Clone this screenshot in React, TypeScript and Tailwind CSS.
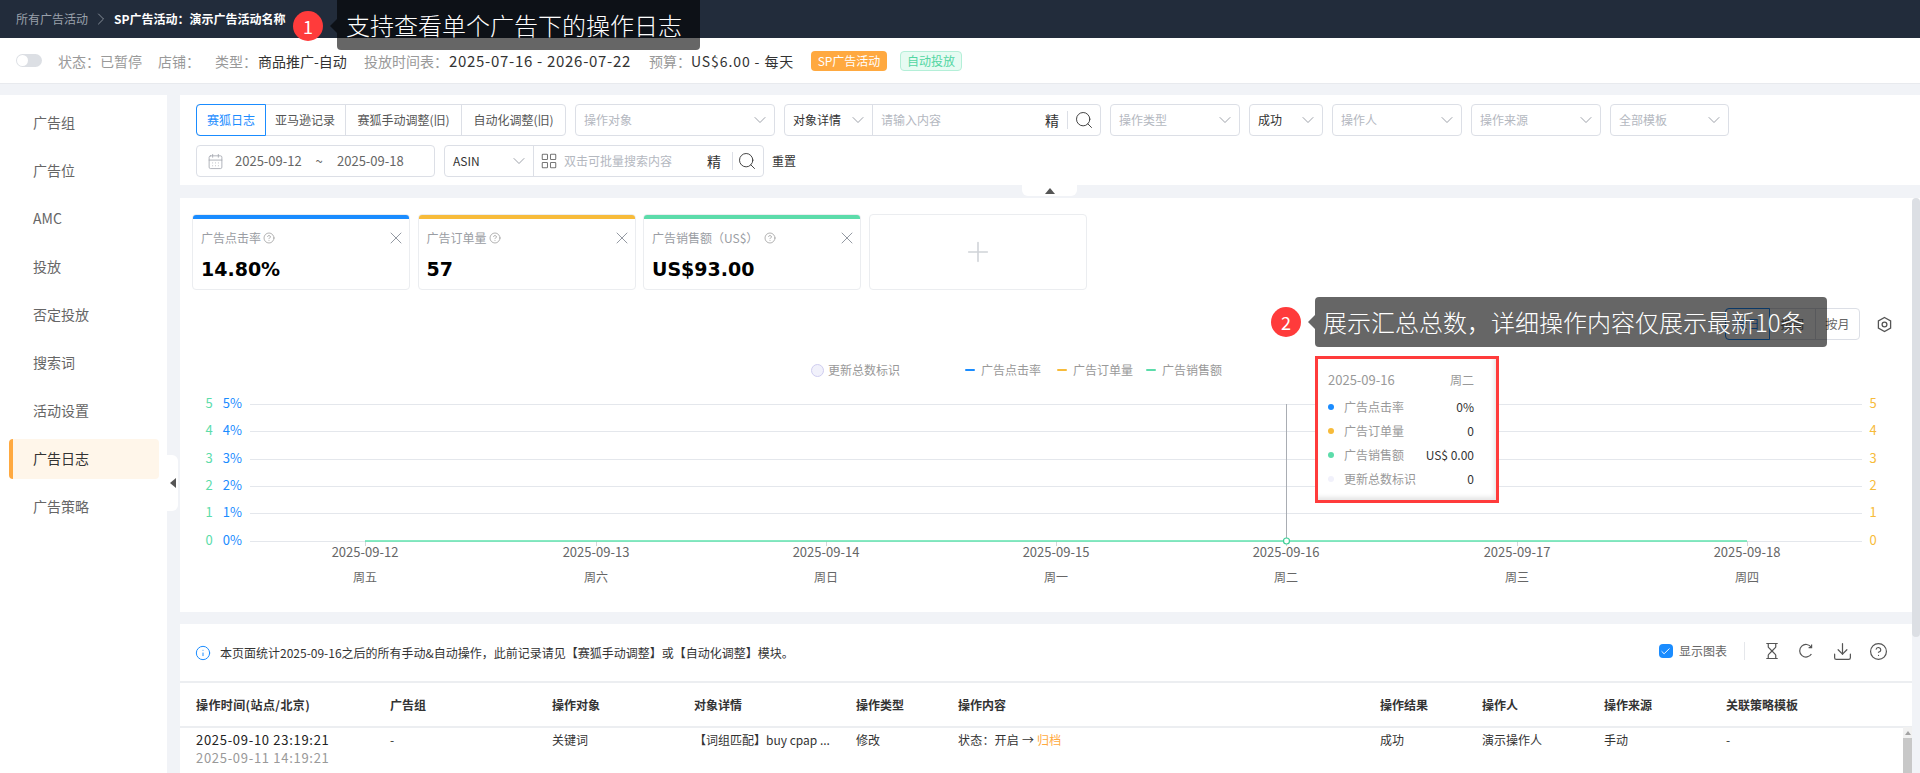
import React from 'react';
import { ChevronDown, ChevronRight, Search, CalendarDays, X, CircleHelp, Plus, Hourglass, Download, Info, Check, LayoutGrid } from 'lucide-react';

const Select = ({ label, w, placeholder = true }: { label: string; w: string; placeholder?: boolean }) => (
  <div className={`${w} h-8 flex items-center justify-between pl-2 pr-1 bg-white border border-[#dcdfe6] rounded text-xs ${placeholder ? 'text-[#b4b8bf]' : 'text-[#333]'}`}>
    <span>{label}</span>
    <ChevronDown className="w-5 h-5 text-[#8a8f99]" strokeWidth={1} />
  </div>
);

const MetricCard = ({ title, value, bar, help }: { title: string; value: string; bar: string; help: string }) => (
  <div className="w-[218px] h-[76px] border border-[#ebedf0] rounded-sm overflow-hidden bg-white">
    <div className={`h-1 ${bar}`}></div>
    <div className="flex items-center justify-between pl-2 pr-[3px] mt-[11px] h-4">
      <div className="flex items-center text-xs text-[#9a9da3]">
        <span>{title}</span>
        <CircleHelp className={`w-3 h-3 ${help}`} strokeWidth={1.5} />
      </div>
      <X className="w-5 h-5 text-[#8a8f99]" strokeWidth={1.1} />
    </div>
    <div className="pl-2 mt-[11px] text-[19px] leading-6 font-bold text-black font-['DejaVu_Sans']">{value}</div>
  </div>
);

const LegendDash = ({ color, label, w }: { color: string; label: string; w: string }) => (
  <div className={`flex items-center ${w}`}>
    <span className={`w-[10px] h-[2px] rounded-sm mr-[6px] ${color}`}></span>
    <span>{label}</span>
  </div>
);

const menu = ['广告组', '广告位', 'AMC', '投放', '否定投放', '搜索词', '活动设置', '广告日志', '广告策略'];
const yLeft = [
  { y: 24, g: '5', b: '5%' },
  { y: 51, g: '4', b: '4%' },
  { y: 79, g: '3', b: '3%' },
  { y: 106, g: '2', b: '2%' },
  { y: 133, g: '1', b: '1%' },
  { y: 161, g: '0', b: '0%' },
];
const xTicks = [
  { x: 185, d: '2025-09-12', w: '周五' },
  { x: 416, d: '2025-09-13', w: '周六' },
  { x: 646, d: '2025-09-14', w: '周日' },
  { x: 876, d: '2025-09-15', w: '周一' },
  { x: 1106, d: '2025-09-16', w: '周二' },
  { x: 1337, d: '2025-09-17', w: '周三' },
  { x: 1567, d: '2025-09-18', w: '周四' },
];
const tipRows = [
  { dot: 'bg-[#1a8cff]', label: '广告点击率', value: '0%' },
  { dot: 'bg-[#f7bb3a]', label: '广告订单量', value: '0' },
  { dot: 'bg-[#5cdcaa]', label: '广告销售额', value: 'US$ 0.00' },
  { dot: 'bg-[#f1f1fb]', label: '更新总数标识', value: '0' },
];
const gridCols = 'grid grid-cols-[194px_162px_142px_162px_102px_422px_102px_122px_122px_1fr]';

export default function App() {
  return (
    <div className="relative w-[1920px] h-[773px] overflow-hidden bg-[#f1f3f7] font-['Noto_Sans_CJK_SC','Noto_Sans',sans-serif] text-[#333]">
      {/* Header */}
      <header className="h-[38px] bg-[#222c3b] flex items-center pl-4 text-xs">
        <span className="text-[#9aa1ab]">所有广告活动</span>
        <ChevronRight className="w-5 h-5 mx-[3px] text-[#9aa1ab]" strokeWidth={1} />
        <span className="text-white font-bold">SP广告活动：演示广告活动名称</span>
      </header>

      {/* Campaign info */}
      <div className="h-[46px] bg-white border-b border-[#e8eaee] flex items-center pl-4 text-sm text-[#999]">
        <div className="relative w-[26px] h-[13px] rounded-full bg-[#dcdfe4] mr-4">
          <span className="absolute left-[1px] top-[1px] w-[11px] h-[11px] rounded-full bg-white"></span>
        </div>
        <span className="w-[100px]">状态：已暂停</span>
        <span className="w-[57px]">店铺：</span>
        <span className="w-[43px]">类型：</span>
        <span className="w-[106px] text-[#333]">商品推广-自动</span>
        <span className="w-[85px]">投放时间表：</span>
        <span className="w-[200px] text-[#333] text-[15px] tracking-[0.7px]">2025-07-16 - 2026-07-22</span>
        <span className="w-[42px]">预算：</span>
        <span className="w-[120px] text-[#333] tracking-[0.9px]">US$6.00 - 每天</span>
        <span className="w-[76px] h-5 rounded-sm bg-[#ffa940] text-white text-xs flex items-center justify-center mr-[13px]">SP广告活动</span>
        <span className="w-[62px] h-5 rounded-sm bg-[#e6fbf2] border border-[#b4efd8] text-[#52d6a2] text-xs flex items-center justify-center">自动投放</span>
      </div>

      <div className="flex pt-[11px] h-[689px]">
        {/* Sidebar */}
        <aside className="relative w-[167px] h-full bg-white pt-2 pl-[9px] pr-2 shrink-0 flex flex-col gap-2">
          {menu.map((item) => (
            <div
              key={item}
              className={
                item === '广告日志'
                  ? 'h-10 pl-5 pb-[2px] flex items-center text-sm text-[#333] bg-[#fff6ea] rounded border-l-4 border-[#ffa940]'
                  : 'h-10 pl-6 pb-[2px] flex items-center text-sm text-[#666]'
              }
            >
              {item}
            </div>
          ))}
          <div className="absolute left-[167px] top-[360px] w-[11px] h-14 bg-white rounded-r-md flex items-center justify-center">
            <span className="w-0 h-0 border-y-[5px] border-y-transparent border-r-[6px] border-r-[#555]"></span>
          </div>
        </aside>

        <main className="ml-[13px] flex-1 min-w-0">
          {/* Filters */}
          <section className="relative h-[90px] bg-white pl-4 pt-[9px]">
            <div className="flex items-start gap-[9px]">
              <div className="flex w-[370px] h-8 border border-[#dcdfe6] rounded text-xs text-[#555]">
                <div className="w-[70px] -m-px border border-[#1a8cff] rounded-l text-[#1a8cff] flex items-center justify-center">赛狐日志</div>
                <div className="w-[81px] flex items-center justify-center border-r border-[#dcdfe6]">亚马逊记录</div>
                <div className="w-[116px] flex items-center justify-center border-r border-[#dcdfe6]">赛狐手动调整(旧)</div>
                <div className="flex-1 flex items-center justify-center">自动化调整(旧)</div>
              </div>
              <Select label="操作对象" w="w-[200px]" />
              <div className="flex w-[317px] h-8 border border-[#dcdfe6] rounded text-xs">
                <div className="w-[88px] border-r border-[#dcdfe6] flex items-center justify-between pl-2 pr-1 text-[#333]">
                  <span>对象详情</span>
                  <ChevronDown className="w-5 h-5 text-[#8a8f99]" strokeWidth={1} />
                </div>
                <div className="flex-1 flex items-center pl-2 text-[#b4b8bf]">请输入内容</div>
                <div className="flex items-center pr-[6px] text-[#333]">
                  <span className="text-sm mr-2">精</span>
                  <span className="w-px h-[18px] bg-[#dcdfe6] mr-[6px]"></span>
                  <Search className="w-5 h-5" strokeWidth={1.1} />
                </div>
              </div>
              <Select label="操作类型" w="w-[130px]" />
              <Select label="成功" w="w-[74px]" placeholder={false} />
              <Select label="操作人" w="w-[130px]" />
              <Select label="操作来源" w="w-[130px]" />
              <Select label="全部模板" w="w-[119px]" />
            </div>
            <div className="flex items-center gap-[9px] mt-[9px]">
              <div className="w-[239px] h-8 border border-[#dcdfe6] rounded flex items-center pl-[10px] text-[13px] text-[#666] whitespace-nowrap">
                <CalendarDays className="w-[17px] h-[17px] text-[#a4a8b0] mr-[11px]" strokeWidth={1.2} />
                <span className="w-[66px]">2025-09-12</span>
                <span className="w-9 text-center">~</span>
                <span>2025-09-18</span>
              </div>
              <div className="flex w-[320px] h-8 border border-[#dcdfe6] rounded text-xs">
                <div className="w-[89px] border-r border-[#dcdfe6] flex items-center justify-between pl-2 pr-1 text-[#333]">
                  <span>ASIN</span>
                  <ChevronDown className="w-5 h-5 text-[#8a8f99]" strokeWidth={1} />
                </div>
                <div className="flex-1 flex items-center pl-[6px] text-[#b4b8bf]">
                  <LayoutGrid className="w-[18px] h-[18px] text-[#777] mr-[6px]" strokeWidth={1.4} />
                  双击可批量搜索内容
                </div>
                <div className="flex items-center pr-[6px] text-[#333]">
                  <span className="text-sm mr-[11px]">精</span>
                  <span className="w-px h-[18px] bg-[#dcdfe6] mr-1"></span>
                  <Search className="w-5 h-5" strokeWidth={1.1} />
                </div>
              </div>
              <span className="text-xs text-[#333] -ml-px">重置</span>
            </div>
            <div className="absolute left-[842px] top-[90px] w-[55px] h-[11px] bg-white rounded-b-md flex items-center justify-center">
              <span className="w-0 h-0 border-x-[5px] border-x-transparent border-b-[6px] border-b-[#555]"></span>
            </div>
          </section>

          {/* Chart */}
          <section className="relative mt-[13px] h-[414px] bg-white pt-4">
            <div className="absolute right-0 top-0 w-2 h-[439px] rounded-sm bg-[#dcdfe4] z-10"></div>
            <div className="flex gap-[7.5px] pl-3">
              <MetricCard title="广告点击率" value="14.80%" bar="bg-[#1a8cff]" help="text-[#999] ml-[2px]" />
              <MetricCard title="广告订单量" value="57" bar="bg-[#f7bb3a]" help="text-[#999] ml-[2px]" />
              <MetricCard title="广告销售额（US$）" value="US$93.00" bar="bg-[#5cdcaa]" help="text-[#999] ml-[6px]" />
              <div className="w-[218px] h-[76px] border border-[#ebedf0] rounded-sm flex items-center justify-center">
                <Plus className="w-8 h-8 text-[#d0d3d8]" strokeWidth={1.2} />
              </div>
            </div>

            <div className="flex justify-end items-center h-8 mt-[18px] pr-[27px] text-xs text-[#666]">
              <div className="flex h-8 border border-[#dcdfe6] rounded w-[135px]">
                <div className="w-[45px] -m-px border border-[#1a8cff] rounded-l flex items-center justify-center text-[#1a8cff]">按日</div>
                <div className="w-[46px] ml-px border-r border-[#dcdfe6] flex items-center justify-center">按周</div>
                <div className="flex-1 flex items-center justify-center">按月</div>
              </div>
              <svg className="ml-4 w-[17px] h-[17px] text-[#555]" viewBox="0 0 17 17" fill="none" stroke="currentColor" strokeWidth="1.3">
                <path d="M8.5 1.5 14.6 5v7l-6.1 3.5L2.4 12V5z" />
                <circle cx="8.5" cy="8.5" r="2.4" />
              </svg>
            </div>

            <div className="flex items-center h-5 mt-5 pl-[631px] text-xs text-[#999]">
              <div className="flex items-center w-[154px]">
                <span className="w-[13px] h-[13px] rounded-full bg-[#f1f1fb] border border-[#cfcdf0] mr-1"></span>
                <span>更新总数标识</span>
              </div>
              <LegendDash color="bg-[#1a8cff]" label="广告点击率" w="w-[92px]" />
              <LegendDash color="bg-[#f7bb3a]" label="广告订单量" w="w-[89px]" />
              <LegendDash color="bg-[#5cdcaa]" label="广告销售额" w="w-[90px]" />
            </div>

            <svg className="block" width="1732" height="232" viewBox="0 0 1732 232" fontSize="13">
              {yLeft.map((t) => (
                <g key={t.g}>
                  <line x1="70" x2="1682" y1={t.y + 0.5} y2={t.y + 0.5} stroke="#e4e7ec" strokeWidth="1" />
                  <text x="29" y={t.y + 4} textAnchor="middle" fill="#5cdcaa">{t.g}</text>
                  <text x="62" y={t.y + 4} textAnchor="end" fill="#1a8cff">{t.b}</text>
                  <text x="1693" y={t.y + 4} textAnchor="middle" fill="#f7bb3a">{t.g}</text>
                </g>
              ))}
              <line x1="1106.5" x2="1106.5" y1="24" y2="161" stroke="#a9adb3" />
              {xTicks.map((t) => (
                <g key={t.d}>
                  <line x1={t.x + 0.5} x2={t.x + 0.5} y1="161" y2="166" stroke="#d4d7dc" />
                  <text x={t.x} y="177" textAnchor="middle" fill="#666">{t.d}</text>
                  <text x={t.x} y="202" textAnchor="middle" fill="#666" fontSize="12">{t.w}</text>
                </g>
              ))}
              <line x1="185" x2="1567" y1="161" y2="161" stroke="#5fe3ae" strokeWidth="1.5" />
              <circle cx="1106.5" cy="161" r="3" fill="#fff" stroke="#3fcf97" strokeWidth="1.2" />
            </svg>

            {/* Chart hover tooltip */}
            <div className="absolute left-[1135px] top-[158px] w-[184px] h-[147px] border-[3px] border-[#ff3b3b] bg-white pl-[10px] pr-[22px] pt-3 text-xs z-10 shadow-[inset_-2px_-3px_4px_rgba(0,0,0,0.1)]">
              <div className="flex justify-between text-[#999] h-[18px] items-center">
                <span className="text-[13px]">2025-09-16</span>
                <span>周二</span>
              </div>
              <div className="mt-[6px]">
                {tipRows.map((r) => (
                  <div key={r.label} className="flex items-center h-6">
                    <span className={`w-[6px] h-[6px] rounded-full mr-[10px] ${r.dot}`}></span>
                    <span className="text-[#999]">{r.label}</span>
                    <span className="ml-auto text-[#333]">{r.value}</span>
                  </div>
                ))}
              </div>
            </div>
          </section>

          {/* Log table */}
          <section className="relative mt-3 h-[149px] bg-white">
            <div className="h-[57px] flex items-center pl-4 pr-8 text-xs text-[#333]">
              <Info className="w-[16px] h-[16px] text-[#1a8cff] mr-[9px] -ml-px" strokeWidth={1.5} />
              <span>本页面统计2025-09-16之后的所有手动&amp;自动操作，此前记录请见【赛狐手动调整】或【自动化调整】模块。</span>
              <div className="ml-auto flex items-center -mt-[3px] text-[#666]">
                <span className="w-[14px] h-[14px] rounded-sm bg-[#1a8cff] flex items-center justify-center mr-[6px]">
                  <Check className="w-[11px] h-[11px] text-white" strokeWidth={2} />
                </span>
                <span>显示图表</span>
                <span className="w-px h-[18px] bg-[#e5e7eb] ml-[17px]"></span>
                <Hourglass className="w-[18px] h-[18px] ml-[18px] text-[#555]" strokeWidth={1.6} />
                <svg className="w-4 h-4 ml-[17px] text-[#555]" viewBox="0 0 16 16" fill="none" stroke="currentColor" strokeWidth="1.2">
                  <path d="M13.2 4.2A6.3 6.3 0 1 0 13.4 11" />
                  <path d="M13.6 1.6v3h-3" />
                </svg>
                <Download className="w-[21px] h-[21px] ml-[18px] text-[#555]" strokeWidth={1.4} />
                <CircleHelp className="w-[19px] h-[19px] ml-4 text-[#555]" strokeWidth={1.5} />
              </div>
            </div>
            <div className={`${gridCols} h-[47px] items-center pl-4 border-y-2 border-[#eceef1] text-xs font-bold text-[#333]`}>
              <span className="tracking-[0.4px]">操作时间(站点/北京)</span>
              <span>广告组</span>
              <span>操作对象</span>
              <span>对象详情</span>
              <span>操作类型</span>
              <span>操作内容</span>
              <span>操作结果</span>
              <span>操作人</span>
              <span>操作来源</span>
              <span>关联策略模板</span>
            </div>
            <div className={`${gridCols} pl-4 pt-[3px] text-xs text-[#333]`}>
              <div className="leading-[18px] text-[13px] tracking-[0.7px]">
                <div className="text-[#222]">2025-09-10 23:19:21</div>
                <div className="text-[#999]">2025-09-11 14:19:21</div>
              </div>
              <span className="leading-[18px]">-</span>
              <span className="leading-[18px]">关键词</span>
              <span className="leading-[18px]">【词组匹配】buy cpap ...</span>
              <span className="leading-[18px]">修改</span>
              <span className="leading-[18px] tracking-[0.2px]">状态：开启 → <span className="text-[#ffa940]">归档</span></span>
              <span className="leading-[18px]">成功</span>
              <span className="leading-[18px]">演示操作人</span>
              <span className="leading-[18px]">手动</span>
              <span className="leading-[18px]">-</span>
            </div>
            <div className="absolute right-2 top-[103px] w-[9px] h-[46px] bg-[#f1f1f1]">
              <div className="mx-auto mt-1 w-0 h-0 border-x-[3px] border-x-transparent border-b-[4px] border-b-[#a3a3a3]"></div>
              <div className="mt-[3px] h-full bg-[#c8c8c8]"></div>
            </div>
            <div className="absolute right-0 top-0 w-2 h-full bg-[#f1f3f7]"></div>
          </section>
        </main>
      </div>

      {/* Annotation 1 */}
      <div className="absolute left-[293px] top-[11px] w-[30px] h-[30px] rounded-full bg-[#ff3b3b] text-white text-lg flex items-center justify-center z-20">1</div>
      <div className="absolute left-[337px] top-0 w-[363px] h-[50px] bg-black/60 rounded-b-sm text-white text-[24px] font-light flex items-center pl-[9px] z-20">
        <span className="absolute -left-[7px] top-[19px] w-0 h-0 border-y-[7px] border-y-transparent border-r-[7px] border-r-black/60"></span>
        支持查看单个广告下的操作日志
      </div>

      {/* Annotation 2 */}
      <div className="absolute left-[1271px] top-[307px] w-[30px] h-[30px] rounded-full bg-[#ff3b3b] text-white text-lg flex items-center justify-center z-20">2</div>
      <div className="absolute left-[1315px] top-[297px] w-[512px] h-[50px] bg-black/60 rounded-sm text-white text-[24px] font-light flex items-center pl-2 z-20">
        <span className="absolute -left-[7px] top-[18px] w-0 h-0 border-y-[7px] border-y-transparent border-r-[7px] border-r-black/60"></span>
        展示汇总总数，详细操作内容仅展示最新10条
      </div>
    </div>
  );
}
